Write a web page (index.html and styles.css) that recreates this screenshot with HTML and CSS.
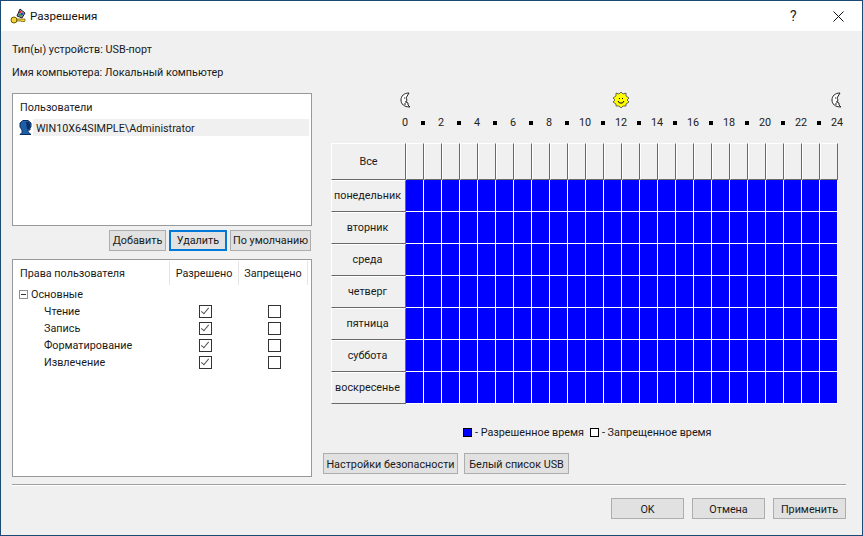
FILE: index.html
```html
<!DOCTYPE html>
<html>
<head>
    <meta charset="utf-8">
    <title>Разрешения</title>
    <link rel="stylesheet" href="styles.css">
</head>
<body>
<div class="window">
    <div class="title-bar">
        <svg class="title-icon" width="18" height="18" viewBox="0 0 18 18">
            <path d="M8 9 L11 2 L16 6 L13 11 Z" fill="#8a8fa8" stroke="#222"/>
            <path d="M10 4h2v2h-2z" fill="#d22"/>
            <path d="M12 6h2v2h-2z" fill="#2a3fd0"/>
            <path d="M10 7h2v2h-2z" fill="#2a9d3a"/>
            <circle cx="5" cy="13" r="3" fill="#f2d43a" stroke="#6b5a00"/>
            <path d="M8 12h8v2l-1 1-1-1-1 1-1-1H8z" fill="#f2d43a" stroke="#6b5a00" stroke-width=".7"/>
        </svg>
        <div class="title-text">Разрешения</div>
        <div class="title-help">?</div>
        <svg class="title-close" width="11" height="11" viewBox="0 0 11 11">
            <path d="M.5 .5 L10.5 10.5 M10.5 .5 L.5 10.5" stroke="#111" fill="none"/>
        </svg>
    </div>

    <div class="content">
        <div class="info-line">Тип(ы) устройств: USB-порт</div>
        <div class="info-line">Имя компьютера: Локальный компьютер</div>

        <div class="columns">
            <div class="left-col">
                <div class="users-box">
                    <div class="users-title">Пользователи</div>
                    <div class="user-row">
                        <svg class="user-icon" width="13" height="15" viewBox="0 0 13 15">
                            <path d="M4 .5h5l3 2.500v4l-1 1v2H9v2l3 2.500H1l2-2V10L1 7V3z" fill="#1c5fa8" stroke="#0c2f63"/>
                            <path d="M7 2h3l1 2v3l-1 2H8z" fill="#0c2f63"/>
                        </svg>
                        <div class="user-name">WIN10X64SIMPLE\Administrator</div>
                    </div>
                </div>

                <div class="user-buttons">
                    <button class="btn btn-add">Добавить</button>
                    <button class="btn btn-remove">Удалить</button>
                    <button class="btn btn-default">По умолчанию</button>
                </div>

                <div class="rights-box">
                    <div class="rights-head">
                        <div class="rights-name">Права пользователя</div>
                        <div class="rights-col">Разрешено</div>
                        <div class="rights-col">Запрещено</div>
                    </div>
                    <div class="rights-group">
                        <span class="tree-toggle"></span>Основные
                    </div>
                    <div class="rights-row">
                        <div class="rights-item">Чтение</div>
                        <div class="rights-check"><span class="check checked"></span></div>
                        <div class="rights-check"><span class="check"></span></div>
                    </div>
                    <div class="rights-row">
                        <div class="rights-item">Запись</div>
                        <div class="rights-check"><span class="check checked"></span></div>
                        <div class="rights-check"><span class="check"></span></div>
                    </div>
                    <div class="rights-row">
                        <div class="rights-item">Форматирование</div>
                        <div class="rights-check"><span class="check checked"></span></div>
                        <div class="rights-check"><span class="check"></span></div>
                    </div>
                    <div class="rights-row">
                        <div class="rights-item">Извлечение</div>
                        <div class="rights-check"><span class="check checked"></span></div>
                        <div class="rights-check"><span class="check"></span></div>
                    </div>
                </div>
            </div>

            <div class="right-col">
                <div class="day-icons">
                    <svg class="moon" width="11" height="16" viewBox="0 0 11 16">
                        <path d="M9 1 C4 1 1 4 1 8 C1 12 4 15 10 15 L8 13 L8 11 L6 10 L7 8 L6 6 Z" fill="#fff" stroke="#222"/>
                        <path d="M4 6h1M5 10h1M4 12h2" stroke="#222"/>
                    </svg>
                    <svg class="sun" width="16" height="16" viewBox="0 0 16 16">
                        <path d="M8 0l2 2 3-1 0 3 3 2-2 2 2 2-3 2 0 2-3 0-2 2-2-2-3 0 0-2-3-2 2-2-2-2 3-2 0-3 3 1z" fill="#ff0" stroke="#444" stroke-width=".8"/>
                        <path d="M6 6h1v1H6zM9 6h1v1H9z" fill="#000"/>
                        <path d="M5 9l1.500 2h3L11 9" fill="none" stroke="#000"/>
                    </svg>
                    <svg class="moon" width="11" height="16" viewBox="0 0 11 16">
                        <path d="M9 1 C4 1 1 4 1 8 C1 12 4 15 10 15 L8 13 L8 11 L6 10 L7 8 L6 6 Z" fill="#fff" stroke="#222"/>
                        <path d="M4 6h1M5 10h1M4 12h2" stroke="#222"/>
                    </svg>
                </div>
                <div class="hours" id="hours"></div>
                <div class="schedule" id="schedule"></div>
                <div class="legend">
                    <span class="legend-box legend-allowed"></span>
                    <span class="legend-text">- Разрешенное время</span>
                    <span class="legend-box legend-denied"></span>
                    <span class="legend-text">- Запрещенное время</span>
                </div>
                <div class="right-buttons">
                    <button class="btn btn-security">Настройки безопасности</button>
                    <button class="btn btn-usb">Белый список USB</button>
                </div>
            </div>
        </div>
    </div>

    <div class="footer">
        <button class="btn btn-footer">OK</button>
        <button class="btn btn-footer">Отмена</button>
        <button class="btn btn-footer">Применить</button>
    </div>
</div>
<script src="schedule.js"></script>
</body>
</html>
```

FILE: styles.css
```css
html, body {
    margin: 0;
    padding: 0;
}

body {
    font-family: Roboto, "Noto Sans", sans-serif;
    font-size: 10.8px;
    color: #1a1a1a;
    background-color: #f0f0f0;
}

.window {
    box-sizing: border-box;
    width: 863px;
    height: 536px;
    border: 1px solid #1b4a72;
    display: flex;
    flex-direction: column;
    background-color: #f0f0f0;
}

.title-bar {
    height: 30px;
    flex: none;
    background-color: #fff;
    display: flex;
    align-items: center;
    padding-left: 8px;
}

.title-icon {
    margin-right: 3px;
}

.title-text {
    font-size: 11.6px;
    flex: 1;
    color: #111;
}

.title-help {
    font-size: 14px;
    width: 20px;
    margin-right: 23px;
    color: #222;
}

.title-close {
    margin-right: 18px;
}

.content {
    flex: 1;
    padding: 11px 0 0 11px;
    display: flex;
    flex-direction: column;
}

.info-line {
    height: 23px;
    line-height: 16px;
}

.columns {
    display: flex;
    margin-top: 5px;
}

.left-col {
    width: 300px;
}

.users-box {
    box-sizing: border-box;
    height: 133px;
    background-color: #fff;
    border: 1px solid #999;
    padding: 5px 2px 0 2px;
}

.users-title {
    padding-left: 5px;
    height: 16px;
    line-height: 18px;
}

.user-row {
    display: flex;
    align-items: center;
    margin-top: 4px;
    height: 17px;
}

.user-icon {
    margin-left: 4px;
    flex: none;
}

.user-name {
    flex: 1;
    height: 17px;
    line-height: 19px;
    padding-left: 3px;
    margin-left: 1px;
    background-color: #f0f0f0;
}

.user-buttons {
    display: flex;
    justify-content: flex-end;
    gap: 3px;
    margin: 4px 1px 8px 0;
}

.btn {
    box-sizing: border-box;
    height: 21px;
    padding: 0;
    font-family: inherit;
    font-size: 10.8px;
    white-space: nowrap;
    color: #1a1a1a;
    background-color: #e1e1e1;
    border: 1px solid #adadad;
}

.btn-add {
    width: 57px;
}

.btn-remove {
    width: 58px;
    border: 2px solid #0078d7;
}

.btn-default {
    width: 81px;
}

.rights-box {
    box-sizing: border-box;
    height: 218px;
    background-color: #fff;
    border: 1px solid #999;
}

.rights-head {
    display: flex;
    height: 24px;
    line-height: 26px;
    margin-top: 1px;
}

.rights-name {
    width: 149px;
    padding-left: 7px;
    border-right: 1px solid #e5e5e5;
}

.rights-col {
    width: 68px;
    text-align: center;
    border-right: 1px solid #e5e5e5;
}

.rights-group {
    display: flex;
    align-items: center;
    height: 17px;
    margin-top: 1px;
    padding-left: 6px;
}

.tree-toggle {
    position: relative;
    box-sizing: border-box;
    width: 9px;
    height: 9px;
    border: 1px solid #919191;
    margin-right: 3px;
}

.tree-toggle::after {
    content: "";
    position: absolute;
    left: 1px;
    top: 3px;
    width: 5px;
    height: 1px;
    background-color: #333;
}

.rights-row {
    display: flex;
    height: 17px;
    align-items: center;
}

.rights-item {
    flex: none;
    width: 127px;
    padding-left: 31px;
}

.rights-check {
    width: 69px;
    display: flex;
    justify-content: center;
}

.check {
    position: relative;
    box-sizing: border-box;
    width: 13px;
    height: 13px;
    border: 1px solid #333;
    background-color: #fff;
}

.check.checked::after {
    content: "";
    position: absolute;
    left: 3px;
    top: 0;
    width: 3px;
    height: 7px;
    border: solid #555;
    border-width: 0 1px 1px 0;
    transform: rotate(40deg);
}

.right-col {
    margin-left: 19px;
    width: 510px;
}

.day-icons {
    height: 18px;
    position: relative;
    margin-top: -1px;
}

.moon, .sun {
    position: absolute;
    top: 0;
}

.moon:first-child {
    left: 69px;
}

.sun {
    left: 282px;
}

.moon:last-child {
    left: 500px;
}

.hours {
    display: flex;
    height: 16px;
    margin-top: 5px;
    margin-left: 65px;
}

.hour {
    flex: none;
    width: 18px;
    text-align: center;
    line-height: 16px;
    color: #222;
}

.hour-dot {
    flex: none;
    width: 18px;
    display: flex;
    align-items: center;
    justify-content: center;
}

.hour-dot span {
    width: 4px;
    height: 4px;
    background-color: #000;
}

.schedule {
    margin-top: 12px;
    width: 507px;
}

.sched-row {
    display: flex;
    height: 32px;
}

.sched-head {
    height: 37px;
}

.sched-day {
    box-sizing: border-box;
    flex: none;
    width: 75px;
    height: 100%;
    padding: 0 2px 2px 0;
    display: flex;
    align-items: center;
    justify-content: center;
    background-color: #f0f0f0;
    border-top: 1px solid #fff;
    border-left: 1px solid #fff;
    border-bottom: 1px solid #696969;
    border-right: 1px solid #696969;
}

.sched-head .sched-day {
    padding: 0;
}

.sched-cell {
    box-sizing: border-box;
    flex: none;
    width: 18px;
    height: 100%;
    background-color: #0000ff;
    border-right: 1px solid #fff;
    border-bottom: 1px solid #fff;
}

.sched-head .sched-cell {
    background-color: #f0f0f0;
    border-top: 1px solid #fff;
    border-left: 1px solid #fff;
    border-right: 1px solid #696969;
    border-bottom: 1px solid #696969;
}

.legend {
    display: flex;
    align-items: center;
    height: 16px;
    margin-top: 20px;
    padding-left: 132px;
}

.legend-box {
    box-sizing: border-box;
    width: 9px;
    height: 9px;
    border: 1px solid #000;
    margin-right: 3px;
}

.legend-allowed {
    background-color: #0000ff;
}

.legend-denied {
    background-color: #fff;
    margin-left: 6px;
}

.right-buttons {
    display: flex;
    gap: 6px;
    margin-top: 13px;
    margin-left: -8px;
}

.right-buttons .btn, .btn-footer {
    padding-top: 2px;
}

.btn-security {
    width: 135px;
}

.btn-usb {
    width: 105px;
}

.footer {
    flex: none;
    margin: 0 16px 0 11px;
    height: 51px;
    border-top: 1px solid #a0a0a0;
    box-shadow: inset 0 1px 0 #fff;
    display: flex;
    justify-content: flex-end;
    gap: 8px;
    padding-top: 13px;
    box-sizing: border-box;
}

.btn-footer {
    width: 73px;
}
```

FILE: schedule.js
```js
var days = ["понедельник", "вторник", "среда", "четверг", "пятница", "суббота", "воскресенье"];

function addRow(schedule, label, className) {
    var row = document.createElement("div");
    row.className = className;

    var day = document.createElement("div");
    day.className = "sched-day";
    day.textContent = label;
    row.appendChild(day);

    for (var i = 0; i < 24; i++) {
        var cell = document.createElement("div");
        cell.className = "sched-cell";
        row.appendChild(cell);
    }
    schedule.appendChild(row);
}

var hours = document.getElementById("hours");
for (var h = 0; h <= 24; h++) {
    var item = document.createElement("div");
    if (h % 2 == 0) {
        item.className = "hour";
        item.textContent = h;
    } else {
        item.className = "hour-dot";
        item.appendChild(document.createElement("span"));
    }
    hours.appendChild(item);
}

var schedule = document.getElementById("schedule");
addRow(schedule, "Все", "sched-row sched-head");
for (var d = 0; d < days.length; d++) {
    addRow(schedule, days[d], "sched-row");
}
```
